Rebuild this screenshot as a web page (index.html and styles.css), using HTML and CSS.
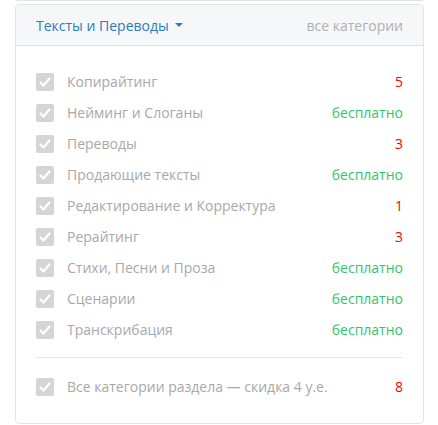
FILE: index.html
```html
<!DOCTYPE html>
<html lang="ru">
<head>
<meta charset="utf-8">
<link rel="stylesheet" href="styles.css">
</head>
<body>
<div class="page">
  <div class="card card-stub-top"></div>
  <div class="card main">
    <div class="head">
      <a class="title">Тексты и Переводы <span class="caret"></span></a>
      <span class="all">все категории</span>
    </div>
    <div class="body">
      <ul class="list">
        <li class="row"><span class="cb"><svg viewBox="0 0 18 18"><path d="M4.5 9.5l3 3 6-7" /></svg></span><span class="name">Копирайтинг</span><span class="price red">5</span></li>
        <li class="row"><span class="cb"><svg viewBox="0 0 18 18"><path d="M4.5 9.5l3 3 6-7" /></svg></span><span class="name">Нейминг и Слоганы</span><span class="price green">бесплатно</span></li>
        <li class="row"><span class="cb"><svg viewBox="0 0 18 18"><path d="M4.5 9.5l3 3 6-7" /></svg></span><span class="name">Переводы</span><span class="price red">3</span></li>
        <li class="row"><span class="cb"><svg viewBox="0 0 18 18"><path d="M4.5 9.5l3 3 6-7" /></svg></span><span class="name">Продающие тексты</span><span class="price green">бесплатно</span></li>
        <li class="row"><span class="cb"><svg viewBox="0 0 18 18"><path d="M4.5 9.5l3 3 6-7" /></svg></span><span class="name">Редактирование и Корректура</span><span class="price red">1</span></li>
        <li class="row"><span class="cb"><svg viewBox="0 0 18 18"><path d="M4.5 9.5l3 3 6-7" /></svg></span><span class="name">Рерайтинг</span><span class="price red">3</span></li>
        <li class="row"><span class="cb"><svg viewBox="0 0 18 18"><path d="M4.5 9.5l3 3 6-7" /></svg></span><span class="name">Стихи, Песни и Проза</span><span class="price green">бесплатно</span></li>
        <li class="row"><span class="cb"><svg viewBox="0 0 18 18"><path d="M4.5 9.5l3 3 6-7" /></svg></span><span class="name">Сценарии</span><span class="price green">бесплатно</span></li>
        <li class="row"><span class="cb"><svg viewBox="0 0 18 18"><path d="M4.5 9.5l3 3 6-7" /></svg></span><span class="name">Транскрибация</span><span class="price green">бесплатно</span></li>
      </ul>
      <div class="total row"><span class="cb"><svg viewBox="0 0 18 18"><path d="M4.5 9.5l3 3 6-7" /></svg></span><span class="name">Все категории раздела — скидка 4 у.е.</span><span class="price red">8</span></div>
    </div>
  </div>
  <div class="card card-stub-bottom"></div>
</div>
</body>
</html>
```
FILE: styles.css
```css
* { box-sizing: border-box; }
html, body { margin: 0; padding: 0; background: #fff; }
body { font-family: "Open Sans", "Liberation Sans", sans-serif; font-size: 14px; color: #a6a6a6; }
.page { padding: 0 14px 0 15px; display: flex; flex-direction: column; gap: 3px; height: 425px; overflow: hidden; }
.card { border: 1px solid #e3e4e6; border-radius: 4px; background: #fff; }
.card-stub-top { height: 8px; margin-top: -1px; border-top-left-radius: 0; border-top-right-radius: 0; background: #f6f7f9; }
.card-stub-bottom { height: 20px; background: #f6f7f9; flex: none; }
.main { flex: none; overflow: hidden; }
.head { height: 41px; background: #f6f7f9; border-bottom: 1px solid #dfe0e2; display: flex; align-items: center; justify-content: space-between; padding: 0 20px; }
.title { color: #2b7bbd; font-size: 14px; display: flex; align-items: center; gap: 6px; }
.caret { width: 0; height: 0; border-left: 4px solid transparent; border-right: 4px solid transparent; border-top: 4px solid #2b7bbd; }
.all { color: #b0b0b0; font-size: 14px; }
.body { padding: 20px 20px 21px; }
.list { list-style: none; margin: 0; padding: 0 0 12px; border-bottom: 1px solid #e8e8e8; }
.row { display: flex; align-items: center; height: 31px; }
.cb { width: 18px; height: 18px; border-radius: 2px; background: #d5d5d5; flex: none; display: flex; margin-right: 13px; }
.cb svg { width: 18px; height: 18px; fill: none; stroke: #fff; stroke-width: 2.2; stroke-linecap: round; stroke-linejoin: round; }
.name { flex: 1; color: #a8a8a8; }
.price { text-align: right; }
.red { color: #ff0000; }
.green { color: #2fc66a; }
.total { margin-top: 13px; }
```
